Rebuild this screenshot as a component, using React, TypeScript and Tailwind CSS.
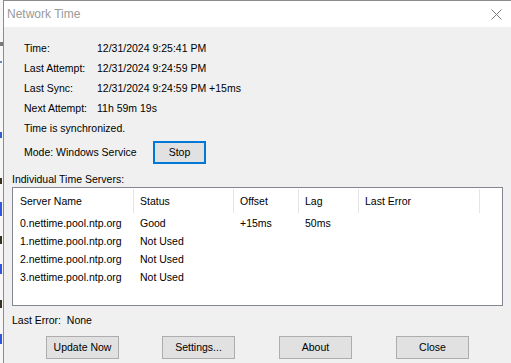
import React from "react";

const font = { fontFamily: '"Liberation Sans", Arial, sans-serif' };

function Btn({ label, className = "" }: { label: string; className?: string }) {
  return (
    <div
      className={`w-[73px] h-[23px] flex items-center justify-center bg-[#e1e1e1] border border-[#adadad] text-[10.5px] text-black ${className}`}
    >
      {label}
    </div>
  );
}

const cols = [
  { w: "w-[120px]", pl: "pl-[7px]" },
  { w: "w-[99px]", pl: "pl-[6px]" },
  { w: "w-[64px]", pl: "pl-[6px]" },
  { w: "w-[59px]", pl: "pl-[6px]" },
  { w: "w-[120px]", pl: "pl-[6px]" },
];

const rows = [
  ["0.nettime.pool.ntp.org", "Good", "+15ms", "50ms", ""],
  ["1.nettime.pool.ntp.org", "Not Used", "", "", ""],
  ["2.nettime.pool.ntp.org", "Not Used", "", "", ""],
  ["3.nettime.pool.ntp.org", "Not Used", "", "", ""],
];

export default function App() {
  const headers = ["Server Name", "Status", "Offset", "Lag", "Last Error"];
  return (
    <div className="w-[511px] h-[363px] flex overflow-hidden bg-white" style={font}>
      {/* background window strip */}
      <div className="w-[3px] h-full bg-[#f7f7f7] flex flex-col">
        <div className="h-[42px]" />
        <div className="h-[4px] w-[3px] bg-[#7a7a7a]" />
        <div className="h-[15px]" />
        <div className="h-[2px] w-[2px] bg-[#6a86c8]" />
        <div className="h-[69px]" />
        <div className="h-[6px] w-[2px] bg-[#2f5fd0]" />
        <div className="h-[40px]" />
        <div className="h-[6px] w-[2px] bg-[#3a3020]" />
        <div className="h-[18px]" />
        <div className="h-[14px] w-[2px] bg-[#3355dd]" />
        <div className="h-[20px]" />
        <div className="h-[8px] w-[2px] bg-[#3a3020]" />
        <div className="h-[20px]" />
        <div className="h-[10px] w-[2px] bg-[#3355dd]" />
        <div className="h-[26px]" />
        <div className="h-[8px] w-[2px] bg-[#3a3020]" />
        <div className="h-[26px]" />
        <div className="h-[10px] w-[2px] bg-[#3355dd]" />
      </div>
      {/* dialog window */}
      <div className="flex-1 h-full flex flex-col border-l border-t border-[#8c8c8c] bg-[#f0f0f0]">
        <div className="h-[26px] bg-white flex items-center justify-between pl-[3px] pr-[9px]">
          <span className="text-[12px] text-[#999999] leading-none">Network Time</span>
          <svg width="11" height="11" viewBox="0 0 11 11">
            <path d="M0.5 0.5 L10.5 10.5 M10.5 0.5 L0.5 10.5" stroke="#7a7a7a" strokeWidth="1" />
          </svg>
        </div>
        <div className="flex flex-col pl-[8px] pr-[8px] text-[10.5px] text-black">
          <div className="pl-[12px] pt-[11px] flex flex-col">
            {[
              ["Time:", "12/31/2024 9:25:41 PM"],
              ["Last Attempt:", "12/31/2024 9:24:59 PM"],
              ["Last Sync:", "12/31/2024 9:24:59 PM +15ms"],
              ["Next Attempt:", "11h 59m 19s"],
            ].map(([l, v]) => (
              <div key={l} className="h-[20px] pt-[2px] flex items-center">
                <span className="w-[73px]">{l}</span>
                <span>{v}</span>
              </div>
            ))}
            <div className="h-[20px] pt-[2px] flex items-center">Time is synchronized.</div>
            <div className="mt-[3px] h-[23px] flex items-center">
              <span className="w-[129px] pt-[1px]">Mode: Windows Service</span>
              <div className="w-[53px] h-[23px] flex items-center justify-center bg-[#e1e1e1] border-2 border-[#0078d7]">
                Stop
              </div>
            </div>
          </div>
          <div className="mt-[8px] h-[14px] pt-[2px] flex items-center">Individual Time Servers:</div>
          <div className="mt-[1px] h-[119px] bg-white border border-[#828790] flex flex-col">
            <div className="h-[25px] flex items-center">
              {headers.map((h, i) => (
                <React.Fragment key={h}>
                  <div className={`${cols[i].w} ${cols[i].pl} h-full pt-[2px] flex items-center`}>{h}</div>
                  <div className="w-px h-[24px] bg-[#e5e5e5] self-end" />
                </React.Fragment>
              ))}
            </div>
            {rows.map((r, ri) => (
              <div key={ri} className="h-[18px] pt-[3px] flex items-center">
                {r.map((c, i) => (
                  <React.Fragment key={i}>
                    <div className={`${cols[i].w} ${cols[i].pl} whitespace-nowrap`}>{c}</div>
                    <div className="w-px" />
                  </React.Fragment>
                ))}
              </div>
            ))}
          </div>
          <div className="mt-[7px] h-[14px] pt-[2px] flex items-center">Last Error:&nbsp; None</div>
          <div className="mt-[9px] flex pl-[34px]">
            <Btn label="Update Now" />
            <Btn label="Settings..." className="ml-[43px]" />
            <Btn label="About" className="ml-[44px]" />
            <Btn label="Close" className="ml-[44px]" />
          </div>
        </div>
      </div>
    </div>
  );
}
